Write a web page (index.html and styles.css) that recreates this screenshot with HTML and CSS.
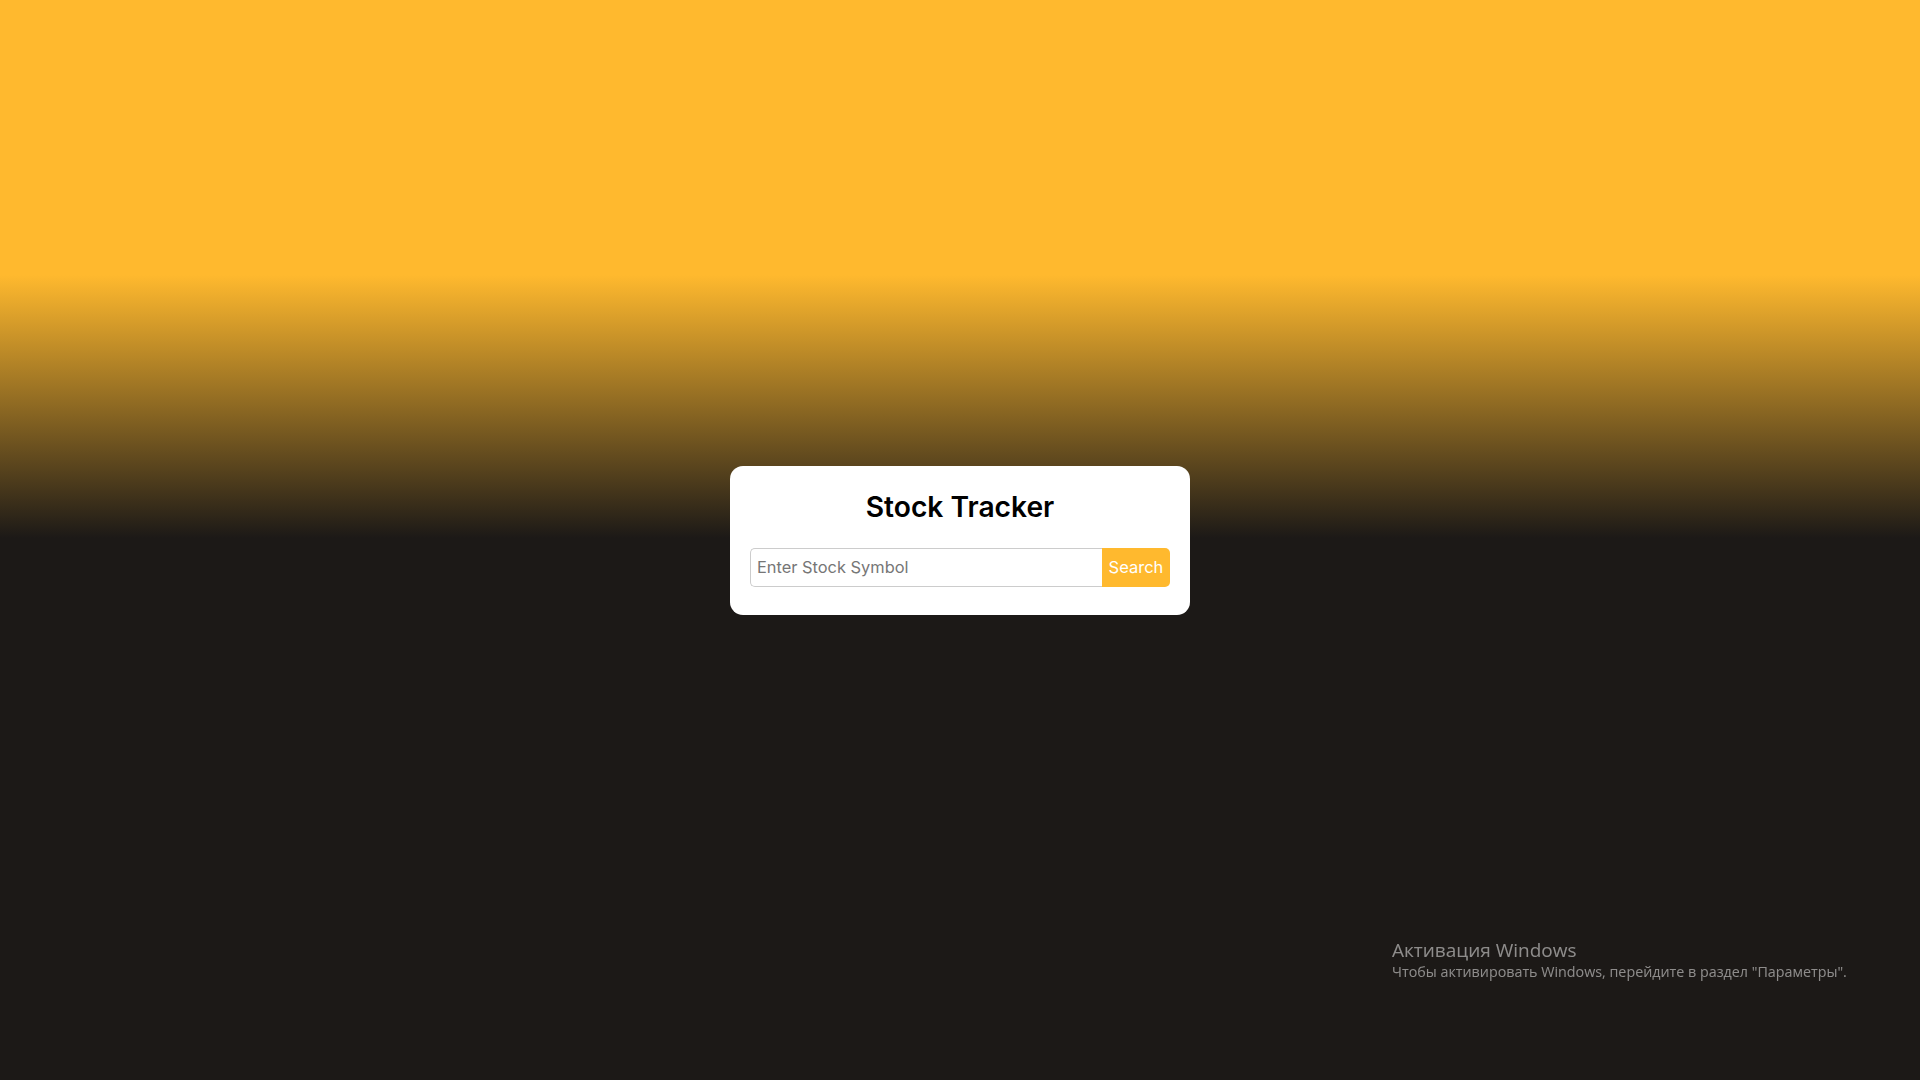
FILE: index.html
```html
<!DOCTYPE html>
<html lang="en">
<head>
<meta charset="utf-8">
<title>Stock Tracker</title>
<link rel="stylesheet" href="styles.css">
</head>
<body>
<main class="page">
  <section class="card">
    <h1 class="title">Stock Tracker</h1>
    <form class="search" onsubmit="return false">
      <input class="search-input" type="text" placeholder="Enter Stock Symbol">
      <button class="search-btn" type="submit">Search</button>
    </form>
  </section>
</main>
<div class="watermark">
  <div class="wm-title">Активация Windows</div>
  <div class="wm-text">Чтобы активировать Windows, перейдите в раздел "Параметры".</div>
</div>
</body>
</html>
```
FILE: styles.css
```css
html, body {
  margin: 0;
  padding: 0;
  height: 100%;
}
body {
  background: linear-gradient(to bottom, #ffb92e 0px, #ffb92e 275px, #1c1917 538px, #1c1917 100%);
  font-family: "Inter", "Open Sans", sans-serif;
  overflow: hidden;
}
.page {
  height: 100vh;
  display: flex;
  align-items: center;
  justify-content: center;
}
.card {
  width: 460px;
  box-sizing: border-box;
  background: #ffffff;
  border-radius: 13px;
  padding: 24px 20px 28px;
}
.title {
  margin: 0 0 24px;
  text-align: center;
  font-size: 28.2px;
  font-weight: 600;
  color: #000;
  line-height: 34px;
}
.search {
  display: flex;
  height: 39px;
}
.search-input {
  flex: 1;
  min-width: 0;
  box-sizing: border-box;
  height: 39px;
  border: 1px solid #cccccc;
  border-right: none;
  border-radius: 5px 0 0 5px;
  padding: 0 6px;
  font-family: "Inter", "Open Sans", sans-serif;
  font-size: 16.4px;
  color: #333;
  outline: none;
}
.search-input::placeholder {
  color: #767676;
}
.search-btn {
  width: 68px;
  height: 39px;
  border: none;
  border-radius: 0 5px 5px 0;
  background: #ffb92e;
  color: #ffffff;
  font-family: "Inter", "Open Sans", sans-serif;
  font-size: 16.5px;
  padding: 0;
  cursor: pointer;
}
.watermark {
  position: fixed;
  left: 1392px;
  top: 937px;
  color: rgba(255, 255, 255, 0.5);
  font-family: "Open Sans", "Noto Sans", sans-serif;
}
.wm-title {
  font-size: 19px;
  line-height: 26px;
}
.wm-text {
  font-size: 14.3px;
  line-height: 18px;
}
```
